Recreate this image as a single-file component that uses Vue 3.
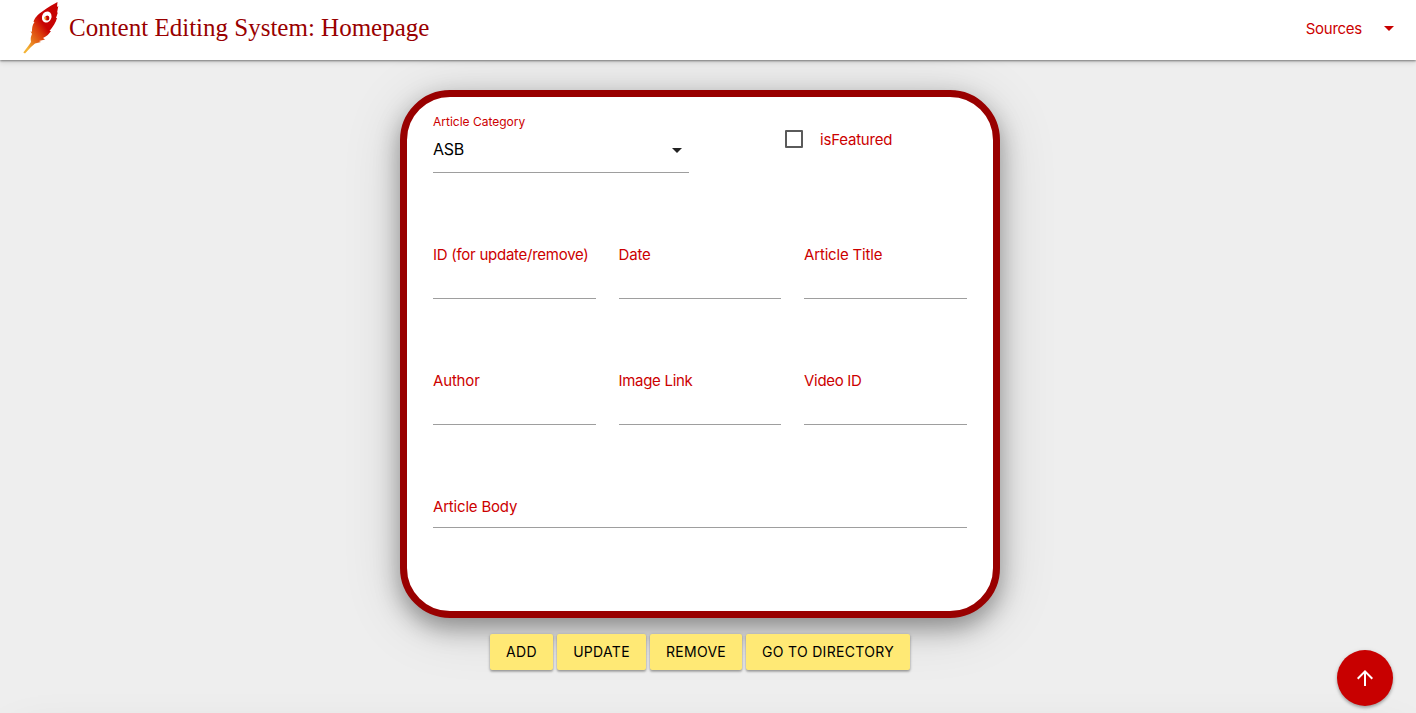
<script setup>
const fieldRows = [
  [
    { label: 'ID (for update/remove)', cls: 'id' },
    { label: 'Date', cls: 'date' },
    { label: 'Article Title', cls: 'title' },
  ],
  [
    { label: 'Author', cls: 'author' },
    { label: 'Image Link', cls: 'image' },
    { label: 'Video ID', cls: 'video' },
  ],
]
const actions = [
  { label: 'Add', cls: 'add' },
  { label: 'Update', cls: 'update' },
  { label: 'Remove', cls: 'remove' },
  { label: 'Go to directory', cls: 'directory' },
]
</script>

<template>
  <div class="page">
    <nav class="navbar">
      <svg class="logo" viewBox="0 0 50 60" aria-hidden="true">
        <defs>
          <linearGradient id="feather" gradientUnits="userSpaceOnUse" x1="8" y1="42" x2="34" y2="23">
            <stop offset="0" stop-color="#f3b335" />
            <stop offset=".3" stop-color="#e5701b" />
            <stop offset=".6" stop-color="#db3b0c" />
            <stop offset=".85" stop-color="#c70303" />
          </linearGradient>
        </defs>
        <path fill="url(#feather)" d="M42.500 2C39 4 33 7 28 11C23 14 19.500 18 18.500 22L19.500 22C17 25 17 29 17 32L15.500 31L17 34C15 38 16 40 16 42L14 45L8.300 52.500L10 53.500L16 47L20 43.500L26 42L24 41L30 39.500L28 38C32 36 34 34 36 31L34.500 31C38 27 41 22 42 18L41 18L43 12L42 13L43.300 6L42 7Z" />
        <ellipse cx="31.700" cy="17" rx="4.700" ry="5.700" fill="#fff" transform="rotate(22 31.700 17)" />
        <ellipse cx="32.200" cy="18" rx="2.200" ry="2.600" fill="#c60505" />
        <path d="M29.300 16.800Q28.800 20 31.300 20.600L31.300 17Z" fill="#ec9b28" />
      </svg>
      <h1 class="brand">Content Editing System: Homepage</h1>
      <a class="sources"><span>Sources</span><svg viewBox="0 0 10 5"><path d="M0 0H10L5 5Z" /></svg></a>
    </nav>

    <main class="content">
      <form class="card" @submit.prevent>
        <div class="top-row">
          <div class="category">
            <div class="category-label">Article Category</div>
            <div class="select"><span>ASB</span><svg viewBox="0 0 10 5"><path d="M0 0H10L5 5Z" /></svg></div>
          </div>
          <div class="featured"><i class="checkbox"></i><span>isFeatured</span></div>
        </div>
        <div v-for="(row, i) in fieldRows" :key="i" class="field-row">
          <div v-for="f in row" :key="f.label" class="field"><span :class="f.cls">{{ f.label }}</span></div>
        </div>
        <div class="body-field"><span>Article Body</span></div>
      </form>
      <div class="actions">
        <button v-for="a in actions" :key="a.cls" :class="['btn', a.cls]">{{ a.label }}</button>
      </div>
    </main>
    <section class="next-section"></section>
    <button class="fab" aria-label="Back to top">
      <svg viewBox="0 0 24 24"><path d="M4 12l1.410 1.410L11 7.830V20h2V7.830l5.580 5.590L20 12l-8-8-8 8z" /></svg>
    </button>
  </div>
</template>

<style>
body { margin: 0; overflow: hidden; }
</style>

<style scoped>
* { box-sizing: border-box; }
.page { position: relative; height: 713px; overflow: hidden; background: #eee; font-family: Inter, "Liberation Sans", sans-serif; font-size: 15px; line-height: 20px; color: #cc0000; }
.navbar { position: relative; z-index: 2; height: 60px; display: flex; align-items: center; padding: 0 22px 0 15px; background: #fff; box-shadow: 0 1px 2px rgba(0,0,0,.45), 0 3px 5px rgba(0,0,0,.1); }
.logo { width: 50px; height: 60px; flex: none; }
.brand { margin: -4px 0 0 4px; font: 400 25px/30px "Liberation Serif", serif; color: #900; white-space: nowrap; }
.sources { margin: -2px 0 0 auto; display: flex; align-items: center; gap: 22px; letter-spacing: -.27px; }
.sources svg { width: 10px; height: 5px; margin-top: -1px; fill: #c80000; }
.content { width: 600px; margin: 30px 0 0 400px; }
.card { height: 528px; border: 7px solid #900; border-radius: 50px; background: #fff; padding: 15px 26px 0; box-shadow: 0 10px 24px rgba(0,0,0,.36), 0 8px 60px rgba(0,0,0,.14); }
.top-row { display: flex; height: 61px; }
.category { width: 256px; border-bottom: 1px solid #9e9e9e; }
.category-label { font-size: 12px; line-height: 20px; }
.select { display: flex; align-items: center; justify-content: space-between; padding: 7px 7px 0 0; font-size: 16px; letter-spacing: -.3px; color: #000; }
.select svg { width: 10px; height: 5px; margin-top: 2px; fill: #222; }
.featured { display: flex; gap: 17px; margin: 18px 0 0 96px; height: 20px; letter-spacing: -.2px; }
.checkbox { width: 18px; height: 18px; border: 2px solid #5a5a5a; border-radius: 1px; }
.field-row { display: grid; grid-template-columns: repeat(3, 162.600px); gap: 22.930px; margin-top: 72px; height: 54px; letter-spacing: -.17px; }
.field { border-bottom: 1px solid #9e9e9e; white-space: nowrap; }
.id { letter-spacing: -.26px; }
.image, .video { letter-spacing: -.3px; }
.body-field { margin-top: 72px; height: 31px; border-bottom: 1px solid #9e9e9e; letter-spacing: -.19px; }
.actions { display: flex; justify-content: center; gap: 4px; margin-top: 16px; }
.btn { position: relative; height: 36px; border: 0; border-radius: 2px; padding: 0; background: #ffe975; color: #000; font: 400 14px/36px Inter, sans-serif; letter-spacing: .3px; text-transform: uppercase; box-shadow: 0 1px 3px rgba(0,0,0,.35), 0 2px 2px rgba(0,0,0,.12); }
.add { width: 63px; }
.btn.update { width: 89px; }
.btn.remove { width: 92px; }
.directory { width: 164px; }
.next-section { height: 300px; margin: 58px 15px 0; box-shadow: 0 15px 50px rgba(0,0,0,.14); }
.fab { position: absolute; right: 23px; bottom: 7px; width: 56px; height: 56px; border: 0; padding: 0; border-radius: 50%; background: #c80000; display: grid; place-items: center; box-shadow: 0 2px 3px rgba(0,0,0,.25), 0 1px 5px rgba(0,0,0,.12); }
.fab svg { width: 24px; height: 24px; fill: #fff; }
</style>
